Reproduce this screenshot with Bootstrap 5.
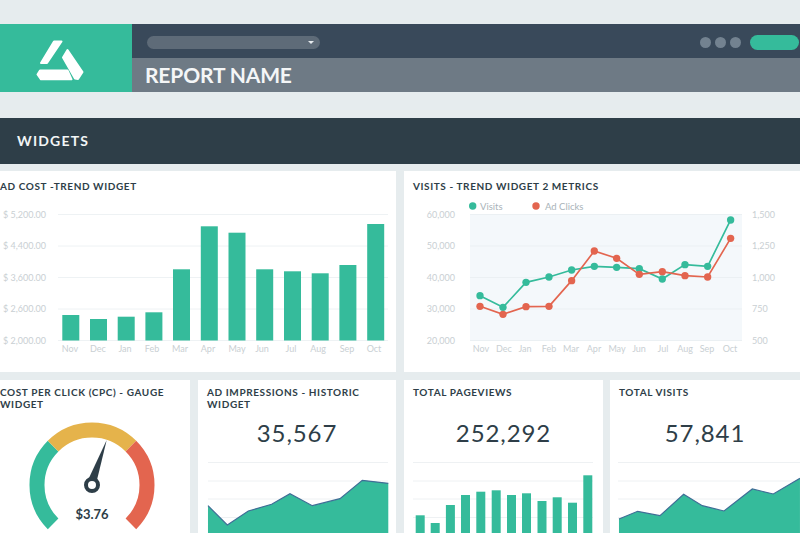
<!DOCTYPE html>
<html lang="en">
<head>
<meta charset="utf-8">
<title>Report</title>
<link href="https://cdn.jsdelivr.net/npm/bootstrap@5.3.0/dist/css/bootstrap.min.css" rel="stylesheet">
<style>
html,body{height:533px;overflow:hidden}
body{background:#e6ecee;font-family:Lato,"Liberation Sans",sans-serif;color:#2e3e48;padding-top:24px}
.hdr{height:68px}
.logo-box{width:132px;background:#35bb9b;padding-left:25px}
.hdr-main{min-width:0}
.hdr-top{height:34px;background:#39495a;padding:2px 1px 0 15px}
.hdr-name{height:34px;background:#6e7a85}
.hdr-name h1{font-size:21px;font-weight:700;color:#f4f6f7;margin:0;line-height:34px;letter-spacing:-.15px;padding-left:13px}
.pick{width:173px;height:13px;background:#5e6b78;border-radius:7px;padding-right:6px}
.pick i{border:3px solid transparent;border-top:3px solid #e8ecef;border-bottom:0;display:block}
.dot-btn{width:11px;height:11px;border-radius:50%;background:#738290}
.go{width:49px;height:15px;border-radius:8px;background:#35bb9b;margin-left:5px}
.wbar{height:46px;margin-top:26px;background:#2e3e48;color:#f2f5f6;padding-left:17px;font-size:14px;font-weight:700;letter-spacing:1.2px;line-height:46px}
.grid-a{margin-top:7px;gap:8px}
.tile{background:#fff;overflow:hidden;min-width:0}
.a-tile{flex:1 1 0;height:201px}
.grid-b{margin-top:8px;gap:8px;height:153px}
.w1{width:190px}.w2{width:198px}.w3{width:199px}.w4{width:190px;margin-left:-1px}
.t-title{font-size:10px;line-height:12px;font-weight:700;letter-spacing:.6px;color:#2e3e48;margin:0;text-transform:uppercase}
.a-tile .t-title{padding:9px 9px 0 9px;height:24px}
.grid-b .t-title{padding:6px 9px 0 9px;height:30px}
.grid-b .w1 .t-title,.a-tile.first .t-title{padding-left:0}
.big-num{height:45px;line-height:45px;text-align:center;font-size:24px;letter-spacing:.9px;font-weight:400;color:#2e3e48}
svg{display:block}
svg text{font-family:Lato,"Liberation Sans",sans-serif;font-size:9px;fill:#c9cfd3}
svg text.gv{font-size:13px;font-weight:700;fill:#2e3e48}
svg text.lg{font-size:9.5px;fill:#a9b3b9}
</style>
</head>
<body>
<header class="hdr d-flex">
  <div class="logo-box d-flex align-items-center flex-shrink-0">
    <svg width="70" height="55" viewBox="25 30 70 55" aria-hidden="true">
      <g fill="#fff" stroke="#fff" stroke-width="2" stroke-linejoin="round">
        <polygon points="54,40.5 61.5,40.5 47,62 41,62"/>
        <polygon points="67.5,49 82.5,71 78,78 75,77.5 63,56.5"/>
        <polygon points="40,69.5 67.5,69.5 71.5,78.3 41,78.3 37.5,73.5"/>
      </g>
    </svg>
  </div>
  <div class="hdr-main flex-grow-1 d-flex flex-column">
    <div class="hdr-top d-flex align-items-center">
      <div class="pick d-flex align-items-center justify-content-end"><i></i></div>
      <div class="ms-auto d-flex align-items-center gap-1">
        <span class="dot-btn"></span><span class="dot-btn"></span><span class="dot-btn"></span>
        <span class="go"></span>
      </div>
    </div>
    <div class="hdr-name"><h1>REPORT NAME</h1></div>
  </div>
</header>

<div class="wbar">WIDGETS</div>

<div class="grid-a d-flex">
  <section class="tile a-tile first">
    <h2 class="t-title">Ad Cost -Trend Widget</h2>
    <svg width="396" height="177" viewBox="0 195 396 177">
      <g stroke="#eef2f4" stroke-width="1">
        <line x1="58" x2="388" y1="214.5" y2="214.5"/><line x1="58" x2="388" y1="246" y2="246"/>
        <line x1="58" x2="388" y1="277.5" y2="277.5"/><line x1="58" x2="388" y1="309" y2="309"/>
        <line x1="58" x2="388" y1="340.5" y2="340.5"/>
      </g>
      <g>
        <text x="3" y="217.5">$ 5,200.00</text><text x="3" y="249">$ 4,400.00</text>
        <text x="3" y="280.5">$ 3,600.00</text><text x="3" y="312">$ 2,600.00</text><text x="3" y="343.5">$ 2,000.00</text>
      </g>
      <g fill="#35bb9b">
        <rect x="62.3" y="315" width="17" height="25.5"/><rect x="90" y="319" width="17" height="21.5"/>
        <rect x="117.7" y="316.7" width="17" height="23.8"/><rect x="145.4" y="312.3" width="17" height="28.2"/>
        <rect x="173" y="269.3" width="17" height="71.2"/><rect x="200.8" y="226.3" width="17" height="114.2"/>
        <rect x="228.5" y="232.7" width="17" height="107.8"/><rect x="256.2" y="269.3" width="17" height="71.2"/>
        <rect x="284" y="271.3" width="17" height="69.2"/><rect x="311.7" y="273.3" width="17" height="67.2"/>
        <rect x="339.4" y="265" width="17" height="75.5"/><rect x="367.2" y="224" width="17" height="116.5"/>
      </g>
      <g text-anchor="middle">
        <text x="70" y="352">Nov</text><text x="98" y="352">Dec</text><text x="125" y="352">Jan</text><text x="152" y="352">Feb</text>
        <text x="180" y="352">Mar</text><text x="208" y="352">Apr</text><text x="237" y="352">May</text><text x="262" y="352">Jun</text>
        <text x="291" y="352">Jul</text><text x="318" y="352">Aug</text><text x="347" y="352">Sep</text><text x="374" y="352">Oct</text>
      </g>
    </svg>
  </section>
  <section class="tile a-tile">
    <h2 class="t-title">Visits - Trend Widget 2 Metrics</h2>
    <svg width="396" height="177" viewBox="404 195 396 177">
      <circle cx="472.7" cy="206" r="3.7" fill="#35bb9b"/><text class="lg" x="480" y="209.5">Visits</text>
      <circle cx="536" cy="206" r="3.7" fill="#e3654f"/><text class="lg" x="545" y="209.5">Ad Clicks</text>
      <rect x="470" y="214" width="272" height="127" fill="#f4f8fb"/>
      <g stroke="#ebf0f3" stroke-width="1">
        <line x1="470" x2="742" y1="214.5" y2="214.5"/><line x1="470" x2="742" y1="246" y2="246"/>
        <line x1="470" x2="742" y1="277.5" y2="277.5"/><line x1="470" x2="742" y1="309" y2="309"/>
        <line x1="470" x2="742" y1="340.5" y2="340.5"/>
      </g>
      <g text-anchor="end">
        <text x="455" y="217.5">60,000</text><text x="455" y="249">50,000</text><text x="455" y="280.5">40,000</text><text x="455" y="312">30,000</text><text x="455" y="343.5">20,000</text>
      </g>
      <g>
        <text x="752" y="217.5">1,500</text><text x="752" y="249">1,250</text><text x="752" y="280.5">1,000</text><text x="752" y="312">750</text><text x="752" y="343.5">500</text>
      </g>
      <g text-anchor="middle">
        <text x="481" y="352">Nov</text><text x="504" y="352">Dec</text><text x="525" y="352">Jan</text><text x="549" y="352">Feb</text>
        <text x="571" y="352">Mar</text><text x="594" y="352">Apr</text><text x="617" y="352">May</text><text x="639" y="352">Jun</text>
        <text x="663" y="352">Jul</text><text x="685" y="352">Aug</text><text x="707" y="352">Sep</text><text x="730" y="352">Oct</text>
      </g>
      <g transform="translate(400 170) scale(.3333)">
        <polyline fill="none" stroke="#35bb9b" stroke-width="5" points="240,377 309,412 378,337 447,321 515,300 583,289 650,292 718,296 787,327 855,284 923,289 992,150"/>
        <g fill="#35bb9b">
          <circle cx="240" cy="377" r="11"/><circle cx="309" cy="412" r="11"/><circle cx="378" cy="337" r="11"/><circle cx="447" cy="321" r="11"/>
          <circle cx="515" cy="300" r="11"/><circle cx="583" cy="289" r="11"/><circle cx="650" cy="292" r="11"/><circle cx="718" cy="296" r="11"/>
          <circle cx="787" cy="327" r="11"/><circle cx="855" cy="284" r="11"/><circle cx="923" cy="289" r="11"/><circle cx="992" cy="150" r="11"/>
        </g>
        <polyline fill="none" stroke="#e3654f" stroke-width="5" points="240,409 309,433 378,410 447,409 515,332 583,243 650,265 718,313 787,305 855,317 923,321 992,205"/>
        <g fill="#e3654f">
          <circle cx="240" cy="409" r="11"/><circle cx="309" cy="433" r="11"/><circle cx="378" cy="410" r="11"/><circle cx="447" cy="409" r="11"/>
          <circle cx="515" cy="332" r="11"/><circle cx="583" cy="243" r="11"/><circle cx="650" cy="265" r="11"/><circle cx="718" cy="313" r="11"/>
          <circle cx="787" cy="305" r="11"/><circle cx="855" cy="317" r="11"/><circle cx="923" cy="321" r="11"/><circle cx="992" cy="205" r="11"/>
        </g>
      </g>
    </svg>
  </section>
</div>

<div class="grid-b d-flex">
  <section class="tile w1">
    <h2 class="t-title">Cost Per Click (CPC) - Gauge Widget</h2>
    <svg width="190" height="123" viewBox="0 410 190 123">
      <g fill="none" stroke-width="15">
        <path d="M53.1 523.9A55 55 0 0 1 53.1 446.1" stroke="#35bb9b"/>
        <path d="M53.1 446.1A55 55 0 0 1 130.9 446.1" stroke="#e5b34b"/>
        <path d="M130.9 446.1A55 55 0 0 1 130.9 523.9" stroke="#e3654f"/>
      </g>
      <polygon points="106.7,440 96.5,482 88.5,479" fill="#2e3e48"/>
      <circle cx="92" cy="485" r="6" fill="#fff" stroke="#2e3e48" stroke-width="4"/>
      <text class="gv" x="92" y="519" text-anchor="middle">$3.76</text>
    </svg>
  </section>
  <section class="tile w2">
    <h2 class="t-title">Ad Impressions - Historic Widget</h2>
    <div class="big-num">35,567</div>
    <svg width="198" height="78" viewBox="198 455 198 78">
      <g stroke="#eef1f3"><line x1="208" x2="388" y1="462.5" y2="462.5"/><line x1="208" x2="388" y1="481" y2="481"/><line x1="208" x2="388" y1="499" y2="499"/><line x1="208" x2="388" y1="517.5" y2="517.5"/></g>
      <g transform="translate(0 375) scale(.3333)">
        <polygon fill="#35bb9b" points="624,392 682,450 745,408 815,388 870,356 937,392 1020,371 1087,316 1165,325 1165,474 624,474"/>
        <polyline fill="none" stroke="#3f6d96" stroke-width="3.5" points="624,392 682,450 745,408 815,388 870,356 937,392 1020,371 1087,316 1165,325"/>
      </g>
    </svg>
  </section>
  <section class="tile w3">
    <h2 class="t-title">Total Pageviews</h2>
    <div class="big-num">252,292</div>
    <svg width="199" height="78" viewBox="404 455 199 78">
      <g stroke="#eef1f3"><line x1="413" x2="593" y1="462.5" y2="462.5"/><line x1="413" x2="593" y1="481" y2="481"/><line x1="413" x2="593" y1="499" y2="499"/><line x1="413" x2="593" y1="517.5" y2="517.5"/></g>
      <g fill="#35bb9b">
        <rect x="415.7" y="515.3" width="9" height="18"/><rect x="430.7" y="523" width="9" height="10"/>
        <rect x="445.9" y="505" width="9" height="28"/><rect x="461" y="495" width="9" height="38"/>
        <rect x="476.3" y="491.7" width="9" height="42"/><rect x="491.7" y="490.3" width="9" height="43"/>
        <rect x="507" y="495" width="9" height="38"/><rect x="522" y="493.3" width="9" height="40"/>
        <rect x="537.5" y="501" width="9" height="32"/><rect x="552.7" y="497.3" width="9" height="36"/>
        <rect x="568" y="502.7" width="9" height="31"/><rect x="583.3" y="475.3" width="9" height="58"/>
      </g>
    </svg>
  </section>
  <section class="tile w4">
    <h2 class="t-title">Total Visits</h2>
    <div class="big-num">57,841</div>
    <svg width="190" height="78" viewBox="610 455 190 78">
      <g stroke="#eef1f3"><line x1="618" x2="800" y1="462.5" y2="462.5"/><line x1="618" x2="800" y1="481" y2="481"/><line x1="618" x2="800" y1="499" y2="499"/><line x1="618" x2="800" y1="517.5" y2="517.5"/></g>
      <g transform="translate(400 375) scale(.3333)">
        <polygon fill="#35bb9b" points="657,432 713,409 780,422 851,358 907,392 972,408 1057,342 1120,357 1200,310 1200,474 657,474"/>
        <polyline fill="none" stroke="#3f6d96" stroke-width="3.5" points="657,432 713,409 780,422 851,358 907,392 972,408 1057,342 1120,357 1200,310"/>
      </g>
    </svg>
  </section>
</div>
<script src="https://cdn.jsdelivr.net/npm/bootstrap@5.3.0/dist/js/bootstrap.bundle.min.js"></script>
</body>
</html>
